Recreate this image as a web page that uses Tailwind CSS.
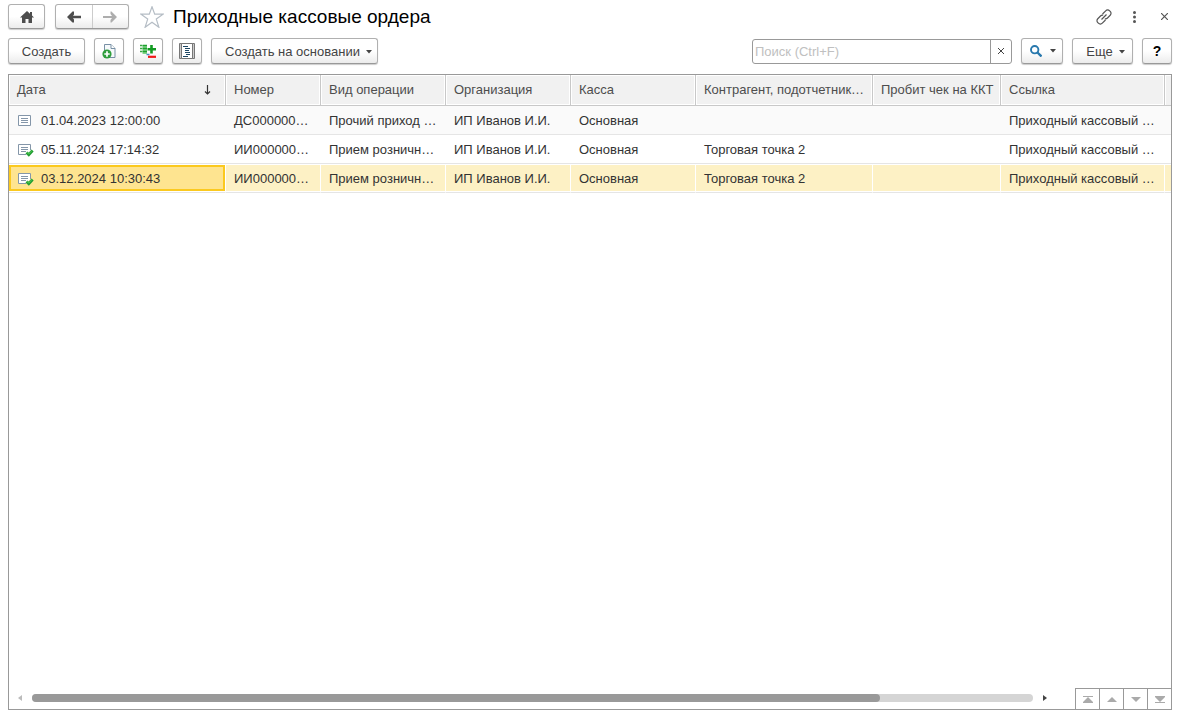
<!DOCTYPE html>
<html lang="ru">
<head>
<meta charset="utf-8">
<title>Приходные кассовые ордера</title>
<script src="https://cdn.jsdelivr.net/npm/@tailwindcss/browser@4"></script>
</head>
<body class="flex h-screen flex-col overflow-hidden bg-white pr-[11px] pb-[3px] pl-2 font-['Liberation_Sans',Arial,sans-serif] text-[13px] leading-4 text-[#333]">

<svg class="hidden" aria-hidden="true">
  <symbol id="doc" viewBox="0 0 16 14">
    <path d="M.5 1.500h12v10H.5z" fill="#fff" stroke="#8496a9"/>
    <path d="M3 4.500h7M3 6.500h7M3 8.500h7" stroke="#8496a9" fill="none"/>
  </symbol>
  <symbol id="docdone" viewBox="0 0 16 14">
    <path d="M8 11.500H.5v-10h12V7" fill="#fff" stroke="#8496a9"/>
    <path d="M3 4.500h7M3 6.500h7M3 8.500h5" stroke="#8496a9" fill="none"/>
    <path d="M8.500 9.500l2.300 2.300L14.600 7.500" stroke="#229c32" stroke-width="2.800" fill="none"/>
    <path d="M9 9.500l1.800 1.500L14 7.500" stroke="#4fce55" stroke-width="1" fill="none"/>
  </symbol>
  <symbol id="caret" viewBox="0 0 6 4"><path d="M0 0h6L3 3.500z" fill="#444"/></symbol>
</svg>

<header class="flex h-8 shrink-0 items-center pt-px">
  <button aria-label="Начальная страница" class="flex h-[25px] w-[37px] items-center justify-center rounded-[3px] border border-[#b0b0b0] border-b-[#999] bg-linear-to-b from-white from-50% to-[#ececec] shadow-[0_1px_1px_#ccc]">
    <svg class="h-3 w-4" viewBox="0 0 16 12"><path d="M8 0l3 2.700V1h2v3.500L15 6.500h-2V12H9.500V8h-3v4H3V6.500H1z" fill="#4d4d4d"/></svg>
  </button>
  <div class="ml-2.5 flex h-[25px] w-[74px] rounded-[3px] border border-[#b0b0b0] border-b-[#999] bg-linear-to-b from-white from-50% to-[#ececec] shadow-[0_1px_1px_#ccc]">
    <button aria-label="Назад" class="flex flex-1 items-center justify-center border-r border-[#ccc]">
      <svg class="h-3 w-4" viewBox="0 0 16 12"><path d="M1 6l5.500-5.500h1.500v3L7 4.800h8v2.400H7l1 1.300v3H6.500z" fill="#4d4d4d"/></svg>
    </button>
    <button aria-label="Вперед" class="flex flex-1 items-center justify-center">
      <svg class="h-3 w-4" viewBox="0 0 16 12"><path d="M15 6L9.500 .5H8.500v2.500L10 5H1v2h9l-1.500 2v2.500h1z" fill="#adadad"/></svg>
    </button>
  </div>
  <button aria-label="Добавить в избранное" class="ml-[11px]">
    <svg class="block h-[22px] w-6" viewBox="0 0 24 22"><path d="M12 .8l2.700 7.400h8.300l-6.700 4.900 2.600 8.200L12 16.300l-6.900 5 2.600-8.200L1 8.200h8.300z" fill="#fff" stroke="#b5bdc5" stroke-width="1.200"/></svg>
  </button>
  <h1 class="ml-[9px] text-[19px] leading-6 text-black">Приходные кассовые ордера</h1>
  <div class="ml-auto flex items-center">
    <button aria-label="Получить ссылку">
      <svg class="block size-4" viewBox="0 0 16 16" fill="none" stroke="#555" stroke-width="1.200"><path d="M6.500 5l3.200-3.200a2.700 2.700 0 0 1 3.900 0l.6.600a2.700 2.700 0 0 1 0 3.900L11.500 9q-1.200 1.200-2.700.8M9.500 11l-3.200 3.200a2.700 2.700 0 0 1-3.900 0l-.6-.6a2.700 2.700 0 0 1 0-3.900L4.500 7q1.200-1.200 2.700-.8M5.500 10.500l5-5"/></svg>
    </button>
    <button aria-label="Меню" class="ml-4">
      <svg class="block h-3 w-4" viewBox="0 0 16 12" fill="#555"><circle cx="6.500" cy="1.500" r="1.500"/><circle cx="6.500" cy="6" r="1.500"/><circle cx="6.500" cy="10.500" r="1.500"/></svg>
    </button>
    <button aria-label="Закрыть" class="mr-1 ml-[17px]">
      <svg class="block size-[7px]" viewBox="0 0 7 7"><path d="M0 0l7 7M7 0L0 7" stroke="#555" stroke-width="1.200"/></svg>
    </button>
  </div>
</header>

<div class="flex shrink-0 items-center gap-[9px] pt-1.5 pb-2.5 text-[#444]">
  <button class="h-[26px] w-[77px] rounded-[3px] border border-[#b0b0b0] border-b-[#999] bg-linear-to-b from-white from-50% to-[#ececec] pt-0.5 shadow-[0_1px_1px_#ccc]">Создать</button>
  <button aria-label="Скопировать" class="flex h-[26px] w-[30px] items-center justify-center rounded-[3px] border border-[#b0b0b0] border-b-[#999] bg-linear-to-b from-white from-50% to-[#ececec] shadow-[0_1px_1px_#ccc]">
    <svg class="h-4 w-3.5" viewBox="0 0 14 16"><path d="M2.500 8V1.500h6.500l4 4V14.500H7" fill="#f6f9fb" stroke="#7890a5"/><path d="M9 1.500v4h4" fill="#fff" stroke="#7890a5"/><circle cx="5" cy="11" r="4.600" fill="#2f9e3c"/><path d="M5 8.300v5.400M2.300 11h5.400" stroke="#fff" stroke-width="1.700"/></svg>
  </button>
  <button aria-label="Дебет и кредит" class="flex h-[26px] w-[30px] items-center justify-center rounded-[3px] border border-[#b0b0b0] border-b-[#999] bg-linear-to-b from-white from-50% to-[#ececec] shadow-[0_1px_1px_#ccc]">
    <svg class="h-3.5 w-4" viewBox="0 0 16 14"><path d="M0 1.500h2M0 4.500h2M0 7.500h2" stroke="#3aa845" stroke-width="1.500"/><path d="M2.500 1h4.500v9H2.500z" fill="#7fd487"/><path d="M2.500 1.500H7M2.500 4.500H7M2.500 7.500H7" stroke="#1fa030" stroke-width="1.500"/><path d="M11.500 1v8.500M7.500 5.200h8.500" stroke="#129b22" stroke-width="2.600"/><path d="M6.500 10.500h3" stroke="#4a86c8" stroke-width="1.500"/><path d="M8 12.800h8" stroke="#f01818" stroke-width="2.200"/></svg>
  </button>
  <button aria-label="Реестр документов" class="flex h-[26px] w-[30px] items-center justify-center rounded-[3px] border border-[#b0b0b0] border-b-[#999] bg-linear-to-b from-white from-50% to-[#ececec] shadow-[0_1px_1px_#ccc]">
    <svg class="size-4" viewBox="0 0 16 16"><path d="M.5.500h15v15H.5z" fill="#ccc" stroke="#777"/><path d="M2.500.500h11v15h-11z" fill="#fff" stroke="#777"/><path d="M4 3.500h5M6 5.500h5M6 7.500h4M6 9.500h5M7 11.500h4M4 13.500h5" stroke="#1d4663"/></svg>
  </button>
  <button class="flex h-[26px] w-[167px] items-center justify-center gap-1.5 rounded-[3px] border border-[#b0b0b0] border-b-[#999] bg-linear-to-b from-white from-50% to-[#ececec] pt-0.5 pl-2 shadow-[0_1px_1px_#ccc]">Создать на основании<svg class="h-1 w-1.5"><use href="#caret"/></svg></button>

  <div class="ml-auto flex h-[25px] w-[260px] rounded-[3px] border border-[#999]">
    <input type="text" aria-label="Поиск" placeholder="Поиск (Ctrl+F)" class="min-w-0 flex-1 px-0.5 pt-0.5 outline-none placeholder:text-[#c0c0c0]">
    <button aria-label="Очистить" class="flex w-[21px] items-center justify-center border-l border-[#999]">
      <svg class="size-1.5" viewBox="0 0 6 6"><path d="M0 0l6 6M6 0L0 6" stroke="#444"/></svg>
    </button>
  </div>
  <button aria-label="Найти" class="flex h-[26px] w-[42px] items-center justify-center gap-2 rounded-[3px] border border-[#b0b0b0] border-b-[#999] bg-linear-to-b from-white from-50% to-[#ececec] pl-0.5 shadow-[0_1px_1px_#ccc]">
    <svg class="size-3" viewBox="0 0 12 12" fill="none" stroke="#2878ad"><circle cx="4.700" cy="4.700" r="3.700" stroke-width="1.900"/><path d="M7.500 7.500l4 4" stroke-width="2.400"/></svg>
    <svg class="h-1 w-1.5"><use href="#caret"/></svg>
  </button>
  <button class="flex h-[26px] w-[61px] items-center justify-center gap-1.5 rounded-[3px] border border-[#b0b0b0] border-b-[#999] bg-linear-to-b from-white from-50% to-[#ececec] pt-0.5 pl-1.5 shadow-[0_1px_1px_#ccc]">Еще<svg class="h-1 w-1.5"><use href="#caret"/></svg></button>
  <button aria-label="Справка" class="h-[26px] w-[30px] rounded-[3px] border border-[#b0b0b0] border-b-[#999] bg-linear-to-b from-white from-50% to-[#ececec] text-sm font-bold text-black shadow-[0_1px_1px_#ccc]">?</button>
</div>

<main class="flex min-h-0 flex-1 flex-col border border-[#999]">
  <div class="flex-1 overflow-hidden">
    <table class="w-full table-fixed border-separate border-spacing-0 whitespace-nowrap [&_td]:overflow-hidden [&_td]:px-2">
      <colgroup><col class="w-[217px]"><col class="w-[95px]"><col class="w-[125px]"><col class="w-[125px]"><col class="w-[125px]"><col class="w-[177px]"><col class="w-[128px]"><col class="w-[164px]"><col></colgroup>
      <thead>
        <tr class="h-[31px] text-left text-[#4d4d4d] [&>th]:border-r [&>th]:border-b [&>th]:border-[#c8c8c8] [&>th]:bg-[#f1f1f1] [&>th]:px-2 [&>th]:py-0 [&>th]:font-normal [&>th]:shadow-[inset_0_0_0_1px_#fff]">
          <th scope="col"><div class="flex items-center justify-between pr-1.5">Дата<svg class="h-2.5 w-[7px]" viewBox="0 0 7 10"><path d="M3.500 0v9M1 6.500l2.500 2.500L6 6.500" fill="none" stroke="#333" stroke-width="1.200"/></svg></div></th>
          <th scope="col">Номер</th><th scope="col">Вид операции</th><th scope="col">Организация</th><th scope="col">Касса</th><th scope="col">Контрагент, подотчетник…</th><th scope="col">Пробит чек на ККТ</th><th scope="col">Ссылка</th><td class="border-b border-[#c8c8c8] bg-[#f1f1f1] shadow-[inset_1px_1px_0_#fff]"></td>
        </tr>
      </thead>
      <tbody>
        <tr class="h-[29px] bg-[#fafafa] [&>td]:border-b [&>td]:border-[#e5e5e5] [&>td]:pt-0.5">
          <td><div class="flex items-center gap-2"><svg class="h-3.5 w-4"><use href="#doc" x="1"/></svg>01.04.2023 12:00:00</div></td>
          <td>ДС000000…</td><td>Прочий приход …</td><td>ИП Иванов И.И.</td><td>Основная</td><td></td><td></td><td>Приходный кассовый …</td><td></td>
        </tr>
        <tr class="h-[29px] [&>td]:border-b [&>td]:border-[#e5e5e5] [&>td]:pt-0.5">
          <td><div class="flex items-center gap-2"><svg class="h-3.5 w-4 overflow-visible"><use href="#docdone" x="1"/></svg>05.11.2024 17:14:32</div></td>
          <td>ИИ000000…</td><td>Прием розничн…</td><td>ИП Иванов И.И.</td><td>Основная</td><td>Торговая точка 2</td><td></td><td>Приходный кассовый …</td><td></td>
        </tr>
        <tr aria-selected="true" class="h-[29px] [&>td]:border-r [&>td]:border-b [&>td]:border-r-white [&>td]:border-b-[#e5e5e5] [&>td]:bg-[#fdf1c5] [&>td]:pt-0.5 [&>td]:shadow-[inset_0_1px_#fff,inset_0_-1px_#fff]">
          <td class="!p-0"><div class="flex h-[26px] items-center gap-2 border-2 border-[#fbc91f] bg-[#fee490] px-1.5 pt-0.5"><svg class="h-3.5 w-4 overflow-visible"><use href="#docdone" x="1"/></svg>03.12.2024 10:30:43</div></td>
          <td>ИИ000000…</td><td>Прием розничн…</td><td>ИП Иванов И.И.</td><td>Основная</td><td>Торговая точка 2</td><td></td><td>Приходный кассовый …</td><td class="!border-r-0"></td>
        </tr>
      </tbody>
    </table>
  </div>
  <div class="flex h-[21px] shrink-0 items-center pl-2">
    <div class="flex flex-1 items-center gap-2.5 pb-0.5">
      <button aria-label="Прокрутить влево"><svg class="block h-1.5 w-[5px]" viewBox="0 0 5 6"><path d="M5 0v6L1 3z" fill="#bbb"/></svg></button>
      <div class="h-2 flex-1 rounded-full bg-[#d5d5d5]"><div class="h-2 w-[84.7%] rounded-full bg-[#999]"></div></div>
      <button aria-label="Прокрутить вправо"><svg class="block h-1.5 w-[5px]" viewBox="0 0 5 6"><path d="M0 0v6l4-3z" fill="#444"/></svg></button>
    </div>
    <div class="ml-[27px] flex h-[21px] border-t border-[#999] [&>button]:flex [&>button]:w-6 [&>button]:items-center [&>button]:justify-center [&>button]:border-l [&>button]:border-[#999]">
      <button aria-label="В начало"><svg class="h-[7px] w-2.5" viewBox="0 0 10 7"><path d="M0 0h10v1H0zM5 1l5 5v1H0V6z" fill="#aaa"/></svg></button>
      <button aria-label="Вверх"><svg class="h-[5px] w-2.5" viewBox="0 0 10 5"><path d="M5 0l5 5H0z" fill="#aaa"/></svg></button>
      <button aria-label="Вниз"><svg class="h-[5px] w-2.5" viewBox="0 0 10 5"><path d="M0 0h10L5 5z" fill="#aaa"/></svg></button>
      <button aria-label="В конец"><svg class="h-[7px] w-2.5" viewBox="0 0 10 7"><path d="M0 0h10v1L5 6 0 1zM0 6h10v1H0z" fill="#aaa"/></svg></button>
    </div>
  </div>
</main>
</body>
</html>
